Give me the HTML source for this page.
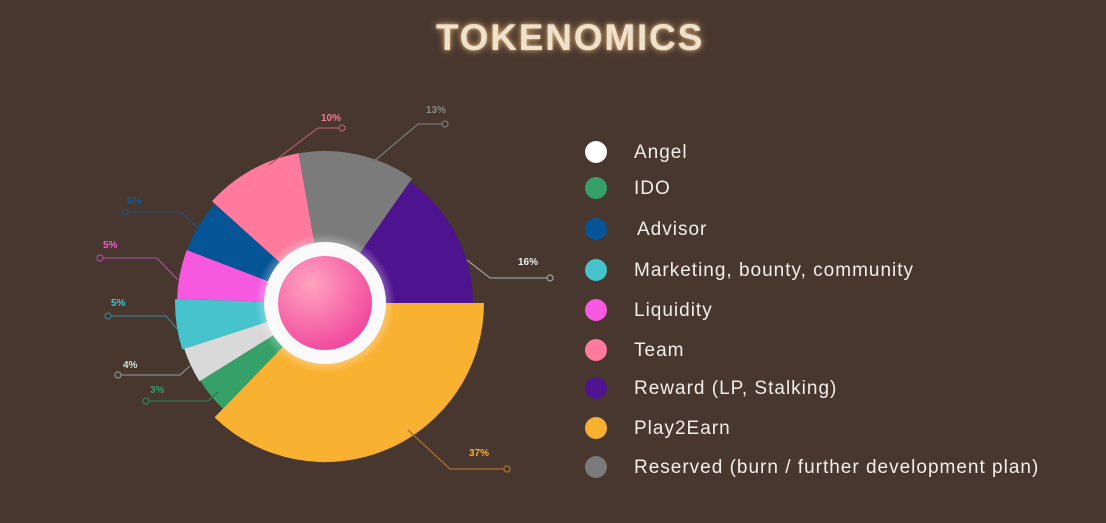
<!DOCTYPE html>
<html><head><meta charset="utf-8"><style>
html,body{margin:0;padding:0}
body{width:1106px;height:523px;overflow:hidden;background:#47372e;font-family:"Liberation Sans",sans-serif;position:relative}
.t{position:absolute;left:17px;width:1106px;top:17px;text-align:center;font-size:37px;font-weight:bold;color:#efe2cc;letter-spacing:1.8px;text-shadow:0 0 8px rgba(255,200,130,.7),0 0 3px rgba(255,210,150,.6)}
.lg{position:absolute;left:585px;font-size:19px;color:#f3eee9;letter-spacing:1px}
.lg i{position:absolute;left:0;top:-11px;width:22px;height:22px;border-radius:50%}
.lg span{position:absolute;left:49px;top:-10px;white-space:nowrap}
</style></head><body>
<div class="t">TOKENOMICS</div>
<svg width="1106" height="523" style="position:absolute;left:0;top:0">
<defs>
<radialGradient id="g1" cx="0.35" cy="0.3" r="0.8"><stop offset="0" stop-color="#ffa4bf"/><stop offset="1" stop-color="#f0409a"/></radialGradient>
<radialGradient id="glow"><stop offset="0.7" stop-color="#fff" stop-opacity="0.6"/><stop offset="1" stop-color="#fff" stop-opacity="0"/></radialGradient>
</defs>
<path d="M325 303 L484 303 A159 159 0 0 1 214.5 417.4Z" fill="#f9b131"/>
<path d="M325 303 L222.9 408.7 A147 147 0 0 1 200.3 380.9Z" fill="#35a068"/>
<path d="M325 303 L199.5 381.4 A148 148 0 0 1 184.2 348.7Z" fill="#d9d9d9"/>
<path d="M325 303 L182.3 349.4 A150 150 0 0 1 175.1 299.1Z" fill="#46c3cd"/>
<path d="M325 303 L177.1 299.1 A148 148 0 0 1 186.8 250Z" fill="#f659e0"/>
<path d="M325 303 L186.8 250 A148 148 0 0 1 215 204Z" fill="#055596"/>
<path d="M325 303 L212 201.3 A152 152 0 0 1 298.6 153.3Z" fill="#ff7a9c"/>
<path d="M325 303 L298.6 153.3 A152 152 0 0 1 412.2 178.5Z" fill="#7b7b7b"/>
<path d="M325 303 L409.9 181.8 A148 148 0 0 1 473 303Z" fill="#4e148f"/>
<circle cx="325" cy="303" r="70" fill="url(#glow)"/>
<circle cx="325" cy="303" r="61" fill="#fafafa"/>
<circle cx="325" cy="303" r="47" fill="url(#g1)"/>
<g fill="none" stroke-width="1.3">
<path d="M269 165 L318 128 L339 128" stroke="#b0566a"/><circle cx="342" cy="128" r="3" stroke="#b0566a"/>
<path d="M373 162 L418 124 L442 124" stroke="#777"/><circle cx="445" cy="124" r="3" stroke="#777"/>
<path d="M467 260 L490 278 L547 278" stroke="#999"/><circle cx="550" cy="278" r="3" stroke="#999"/>
<path d="M408 430 L450 469 L504 469" stroke="#a86e2a"/><circle cx="507" cy="469" r="3" stroke="#a86e2a"/>
<path d="M197 227 L181 212 L128 212" stroke="#2b4e70"/><circle cx="125" cy="212" r="3" stroke="#2b4e70"/>
<path d="M178 280 L157 258 L103 258" stroke="#a04c94"/><circle cx="100" cy="258" r="3" stroke="#a04c94"/>
<path d="M178 330 L166 316 L111 316" stroke="#3c7c84"/><circle cx="108" cy="316" r="3" stroke="#3c7c84"/>
<path d="M190 366 L180 375 L121 375" stroke="#888"/><circle cx="118" cy="375" r="3" stroke="#888"/>
<path d="M218 392 L208 401 L149 401" stroke="#2f7a50"/><circle cx="146" cy="401" r="3" stroke="#2f7a50"/>
</g>
<g font-family="Liberation Sans" font-weight="bold" font-size="10">
<text x="321" y="121" fill="#f37a96">10%</text>
<text x="426" y="113" fill="#8a8a8a">13%</text>
<text x="518" y="265" fill="#eee">16%</text>
<text x="469" y="456" fill="#f9b131">37%</text>
<text x="127" y="204" fill="#0a5aa0">5%</text>
<text x="103" y="248" fill="#f05ad8">5%</text>
<text x="111" y="306" fill="#46c3cd">5%</text>
<text x="123" y="368" fill="#ddd">4%</text>
<text x="150" y="393" fill="#35a068">3%</text>
</g>
</svg>
<div class="lg" style="top:152px"><i style="background:#fff"></i><span>Angel</span></div>
<div class="lg" style="top:188px"><i style="background:#35a068"></i><span>IDO</span></div>
<div class="lg" style="top:229px"><i style="background:#055596"></i><span style="left:52px">Advisor</span></div>
<div class="lg" style="top:270px"><i style="background:#46c3cd"></i><span>Marketing, bounty, community</span></div>
<div class="lg" style="top:310px"><i style="background:#f659e0"></i><span>Liquidity</span></div>
<div class="lg" style="top:350px"><i style="background:#ff7a9c"></i><span>Team</span></div>
<div class="lg" style="top:388px"><i style="background:#4e148f"></i><span>Reward (LP, Stalking)</span></div>
<div class="lg" style="top:428px"><i style="background:#f9b131"></i><span>Play2Earn</span></div>
<div class="lg" style="top:467px"><i style="background:#7b7b7b"></i><span>Reserved (burn / further development plan)</span></div>
</body></html>
